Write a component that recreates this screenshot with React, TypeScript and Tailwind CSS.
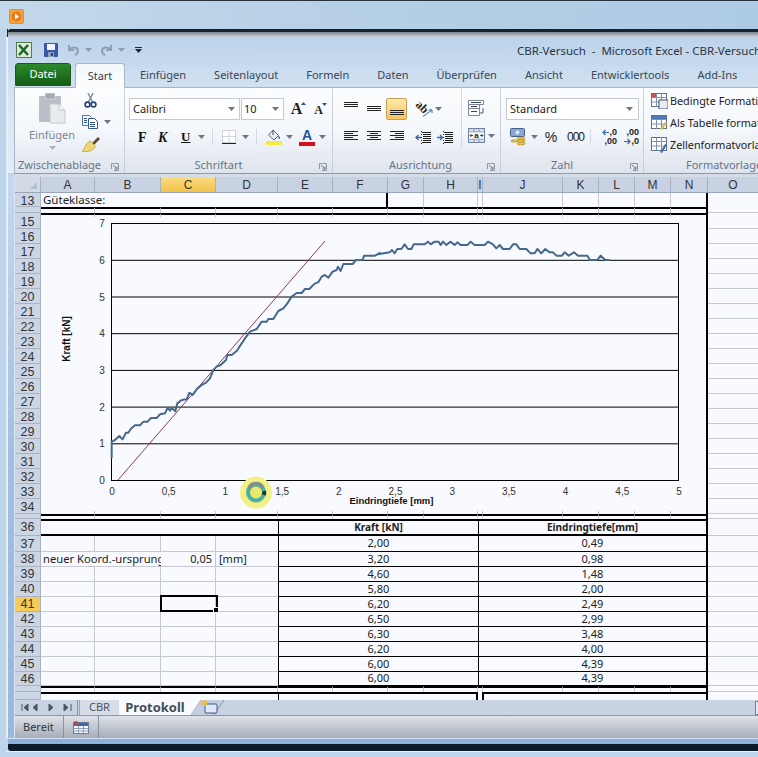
import { ReactNode } from "react";

const cols = [
  { name: "A", w: "w-[54px]" },
  { name: "B", w: "w-[66px]" },
  { name: "C", w: "w-[55px]" },
  { name: "D", w: "w-[62px]" },
  { name: "E", w: "w-[55px]" },
  { name: "F", w: "w-[55px]" },
  { name: "G", w: "w-[36px]" },
  { name: "H", w: "w-[54px]" },
  { name: "I", w: "w-[5px]" },
  { name: "J", w: "w-[80px]" },
  { name: "K", w: "w-[36px]" },
  { name: "L", w: "w-[36px]" },
  { name: "M", w: "w-[36px]" },
  { name: "N", w: "w-[37px]" },
];

const tableRows = [
  { n: 37, h: "h-[16px]", kraft: "2,00", tiefe: "0,49" },
  { n: 38, h: "h-[15px]", kraft: "3,20", tiefe: "0,98" },
  { n: 39, h: "h-[15px]", kraft: "4,60", tiefe: "1,48" },
  { n: 40, h: "h-[15px]", kraft: "5,80", tiefe: "2,00" },
  { n: 41, h: "h-[15px]", kraft: "6,20", tiefe: "2,49" },
  { n: 42, h: "h-[15px]", kraft: "6,50", tiefe: "2,99" },
  { n: 43, h: "h-[15px]", kraft: "6,30", tiefe: "3,48" },
  { n: 44, h: "h-[15px]", kraft: "6,20", tiefe: "4,00" },
  { n: 45, h: "h-[15px]", kraft: "6,00", tiefe: "4,39" },
  { n: 46, h: "h-[14px]", kraft: "6,00", tiefe: "4,39" },
];

const chartRows = Array.from({ length: 19 }, (_, i) => i + 16);

// curve traced off the 3x crops, so every piece keeps its crop offset
const trace = (pts: number[][], dx: number, dy: number) =>
  pts.map(([x, y]) => `${dx + x / 3},${dy + y / 3}`).join(" ");

const curve = [
  trace(
    [[335,295],[335,245],[345,240],[358,228],[368,238],[378,218],[385,218],[392,207],[405,196],[420,196],[430,185],[443,185],[453,174],[470,174],[480,163],[495,160],[503,143],[510,152],[516,143],[526,154],[532,130],[545,120],[560,118],[568,98],[578,105],[590,88],[605,75],[618,68],[630,55],[640,30],[650,20],[662,15],[678,0]],
    0,
    360
  ),
  trace(
    [[682,540],[695,540],[710,528],[735,490],[750,470],[770,462],[785,440],[800,440],[805,432],[820,432],[835,408],[850,400],[862,385],[875,365],[890,354],[905,354],[915,342],[928,342],[945,325],[955,322],[965,305],[975,300],[985,308],[998,290],[1010,285],[1014,275],[1022,288],[1030,267],[1058,267],[1068,255],[1088,255],[1092,242],[1125,242],[1140,234]],
    0,
    175
  ),
  trace(
    [[0,238],[35,232],[42,225],[50,235],[58,222],[70,222],[80,208],[90,222],[100,222],[107,208],[140,208],[150,200],[158,208],[170,200],[182,200],[188,210],[195,200],[205,210],[217,200],[230,210],[238,202],[248,210],[268,210],[278,200],[290,210],[320,210],[330,200],[345,208],[355,220],[365,210],[375,222],[395,222],[405,208],[415,208],[425,222],[445,222],[458,235],[470,235],[478,222],[490,235],[502,222],[515,232],[525,232],[535,242],[552,242],[560,232],[572,242],[588,232],[600,242],[628,242],[636,255],[658,255],[668,242],[682,255],[695,255]],
    378,
    175
  ),
].join(" ");

function Caret({ className = "" }: { className?: string }) {
  return (
    <svg width="7" height="4" viewBox="0 0 7 4" className={`shrink-0 ${className}`}>
      <path d="M0 0h7L3.5 4z" fill="#6d7683" />
    </svg>
  );
}

function Launcher({ className = "" }: { className?: string }) {
  return (
    <svg width="8" height="8" viewBox="0 0 8 8" className={className}>
      <path d="M.5 6V.5H7.5V7.5H3" fill="none" stroke="#8b97a6" />
      <path d="M2 2l4 4M6 3.5V6H3.5" fill="none" stroke="#6d7a8a" />
    </svg>
  );
}

function Lines({ rows, width = 14 }: { rows: number[][]; width?: number }) {
  return (
    <svg width={width} height="16" viewBox={`0 0 ${width} 16`} className="shrink-0">
      {rows.map(([a, b, y]) => (
        <rect key={`${a}-${y}`} x={a} y={y} width={b - a} height="1" fill="#222" />
      ))}
    </svg>
  );
}

function Sep({ className = "" }: { className?: string }) {
  return <div className={`w-px self-stretch bg-[#d3d9e1] ${className}`} />;
}

function Group({
  label,
  w,
  labelClass = "justify-center",
  children,
}: {
  label: string;
  w: string;
  labelClass?: string;
  children: ReactNode;
}) {
  return (
    <div className={`relative flex shrink-0 flex-col border-r border-[#c9d0d9] ${w}`}>
      <div className="h-[69px]">{children}</div>
      <div className={`flex h-[15px] items-center text-[11px] leading-none whitespace-nowrap text-[#667486] ${labelClass}`}>
        {label}
      </div>
      <Launcher className="absolute right-[5px] bottom-[2px]" />
    </div>
  );
}

function ClipboardGroup() {
  return (
    <div className="flex">
      <div className="ml-[7px] flex w-[60px] flex-col items-center pt-[5px]">
        <svg width="27" height="31" viewBox="0 0 27 31">
          <rect x="0" y="3" width="22" height="26" rx="1" fill="#b9bec7" />
          <rect x="6" y="0" width="10" height="6" rx="1" fill="#a4a9b2" stroke="#dfe2e6" strokeWidth=".7" />
          <path d="M11 11h9l6 6v13H11z" fill="#e9ebee" stroke="#c3c8cf" />
          <path d="M20 11v6h6" fill="#f6f7f8" stroke="#c3c8cf" />
        </svg>
        <div className="mt-[4px] text-[11px] leading-[14px] text-[#7a8594]">Einfügen</div>
        <Caret className="mt-[4px] opacity-50" />
      </div>
      <div className="flex flex-col pt-[5px]">
        <svg width="16" height="15" viewBox="0 0 16 15" className="ml-[1px]">
          <path d="M5 0l4.5 9M10 0L5.5 9" stroke="#7e8794" strokeWidth="1.4" fill="none" />
          <circle cx="4.5" cy="11.5" r="2.4" fill="none" stroke="#24417a" strokeWidth="1.6" />
          <circle cx="10.5" cy="11.5" r="2.4" fill="none" stroke="#24417a" strokeWidth="1.6" />
        </svg>
        <div className="mt-[7px] flex items-center gap-[5px]">
          <svg width="17" height="14" viewBox="0 0 17 14">
            <path d="M.5.5h7l2 2v8H.5z" fill="#f4f6fa" stroke="#5873a3" />
            <path d="M6.5 3.5h6l3 3v7h-9z" fill="#fff" stroke="#34568e" />
            <path d="M2 3.5h3M2 5.5h3M2 7.5h3M8 7.5h5M8 9.5h5M8 11.5h5" stroke="#34568e" />
          </svg>
          <Caret />
        </div>
        <svg width="18" height="15" viewBox="0 0 18 15" className="mt-[8px]">
          <path d="M10 6l6-6 2 2-6 6z" fill="#5a4a32" />
          <path d="M8 3.5l6 6-3 3c-3 2-7 2.5-11 2 2-1.500 2-4 5-8z" fill="#f0d66e" stroke="#a48c3d" strokeWidth=".6" />
        </svg>
      </div>
    </div>
  );
}

function FontGroup() {
  return (
    <div className="flex flex-col pt-[10px] pl-[4px]">
      <div className="flex h-[22px]">
        <div className="flex w-[111px] items-center justify-between border border-[#c4cbd4] bg-white pr-[4px] pl-[3px] text-[11px] text-[#222]">
          Calibri
          <Caret />
        </div>
        <div className="ml-px flex w-[43px] items-center justify-between border border-[#c4cbd4] bg-white pr-[4px] pl-[2px] text-[11px] text-[#222]">
          10
          <Caret />
        </div>
        <div className="relative ml-[5px] w-[15px] text-center font-['Liberation_Serif'] text-[16px] leading-[22px] font-bold text-[#1d1d1d]">
          A
          <svg width="5" height="3" viewBox="0 0 5 3" className="absolute top-[4px] -right-[2px]">
            <path d="M0 3h5L2.500 0z" fill="#26518f" />
          </svg>
        </div>
        <div className="relative ml-[9px] w-[11px] pt-px text-center font-['Liberation_Serif'] text-[12px] leading-[22px] font-bold text-[#1d1d1d]">
          A
          <svg width="5" height="3" viewBox="0 0 5 3" className="absolute top-[5px] -right-[3px]">
            <path d="M0 0h5L2.500 3z" fill="#26518f" />
          </svg>
        </div>
      </div>
      <div className="mt-[6px] flex h-[22px] items-center font-['Liberation_Serif'] text-[#111]">
        <span className="ml-[9px] w-[8px] text-[14px] font-bold">F</span>
        <span className="ml-[12px] w-[11px] text-[14px] font-bold italic">K</span>
        <span className="ml-[12px] w-[10px] text-[13px] font-bold underline">U</span>
        <Caret className="ml-[7px]" />
        <Sep className="mx-[7px] my-[3px]" />
        <svg width="14" height="14" viewBox="0 0 14 14" className="ml-[2px]">
          <path d="M.5.5h13v12H.5z" fill="#fff" stroke="#a9afb8" strokeDasharray="1 1" />
          <path d="M7 .5v12M.5 6.500h13" stroke="#a9afb8" strokeDasharray="1 1" />
          <path d="M0 13.500h14" stroke="#222" />
        </svg>
        <Caret className="ml-[6px]" />
        <Sep className="mx-[7px] my-[3px]" />
        <svg width="16" height="16" viewBox="0 0 16 16" className="ml-[2px]">
          <path d="M7 1l5.500 5.500L8 11 2.500 6z" fill="#e9eef5" stroke="#5b6674" />
          <path d="M7 1v5" stroke="#3b4552" />
          <path d="M12.500 6.500c1.500 1.500 2 3 1 3.500s-1.500-1.500-1-3.500z" fill="#365f9c" />
          <rect x="0" y="12" width="16" height="4" fill="#f3ec3e" />
        </svg>
        <Caret className="ml-[4px]" />
        <div className="ml-[6px] flex w-[16px] flex-col items-center">
          <span className="font-['Liberation_Sans'] text-[14px] leading-[12px] font-bold text-[#26518f]">A</span>
          <div className="mt-px h-[4px] w-[16px] bg-[#d2121c]" />
        </div>
        <Caret className="ml-[4px]" />
      </div>
    </div>
  );
}

function IndentIcon({ right = false }: { right?: boolean }) {
  return (
    <svg width="16" height="13" viewBox="0 0 16 13" className="shrink-0">
      <path d="M7 1.500h9M8 3.500h8M8 5.500h8M8 7.500h8M8 9.500h8M7 11.500h9" stroke="#1c1c1c" />
      <path d="M6.500 0v13" stroke="#1c1c1c" strokeDasharray="1 2" />
      {right ? (
        <path d="M0 6.500h5M3 4l2.500 2.500L3 9" fill="none" stroke="#3a66a6" strokeWidth="1.300" />
      ) : (
        <path d="M6 6.500H1M3.500 4L1 6.500 3.500 9" fill="none" stroke="#3a66a6" strokeWidth="1.300" />
      )}
    </svg>
  );
}

function AlignGroup() {
  const top = [[0, 14, 1], [0, 14, 3], [0, 14, 5]];
  const mid = [[0, 14, 5], [0, 14, 7], [0, 14, 9]];
  const left = [[0, 14, 2], [0, 9, 4], [0, 14, 6], [0, 9, 8], [0, 14, 10]];
  const center = [[0, 14, 2], [3, 11, 4], [0, 14, 6], [3, 11, 8], [0, 14, 10]];
  const right = [[0, 14, 2], [5, 14, 4], [0, 14, 6], [5, 14, 8], [0, 14, 10]];
  return (
    <div className="flex">
      <div className="flex w-[128px] flex-col pt-[10px] pl-[11px]">
        <div className="flex h-[22px] items-center">
          <Lines rows={top} />
          <div className="ml-[9px]">
            <Lines rows={mid} />
          </div>
          <div className="ml-[5px] flex h-[22px] w-[21px] items-center justify-center rounded-[2px] border border-[#c2a25a] bg-gradient-to-b from-[#fde9a8] to-[#f9c560] pt-[8px]">
            <Lines rows={mid} />
          </div>
          <div className="relative ml-[9px] h-[16px] w-[17px]">
            <span className="absolute top-0 left-0 rotate-[45deg] font-['Liberation_Serif'] text-[12px] leading-[12px] font-bold text-[#222]">ab</span>
            <svg width="10" height="10" viewBox="0 0 10 10" className="absolute right-0 bottom-0">
              <path d="M0 9.500L9 3M9 3H5.500M9 3v3" stroke="#47659a" fill="none" />
            </svg>
          </div>
          <Caret className="ml-[2px]" />
        </div>
        <div className="mt-[6px] flex h-[22px] items-center">
          <Lines rows={left} />
          <div className="ml-[9px]">
            <Lines rows={center} />
          </div>
          <div className="ml-[9px]">
            <Lines rows={right} />
          </div>
          <div className="ml-[11px]">
            <IndentIcon />
          </div>
          <div className="ml-[6px]">
            <IndentIcon right />
          </div>
        </div>
      </div>
      <div className="flex flex-col border-l border-[#d3d9e1] pt-[12px] pl-[6px]">
        <svg width="17" height="17" viewBox="0 0 17 17">
          <path d="M.5.500h15v4H.5zM.5 4.500h11v4H.5zM.5 8.500h11v7H.5z" fill="#fafbfc" stroke="#7e8795" />
          <path d="M3 2.500h10M3 6.500h6M3 11.500h6" stroke="#38475a" />
          <path d="M15 8v5h-3" fill="none" stroke="#3a5d96" />
        </svg>
        <div className="mt-[11px] flex items-center gap-[3px]">
          <svg width="17" height="15" viewBox="0 0 17 15" fontFamily="Liberation Sans">
            <rect x=".5" y=".5" width="16" height="14" fill="#d3deeb" stroke="#6f8099" />
            <path d="M.5 4h16M.5 11h16M6 .5V4M11 .5V4M6 11v3.500M11 11v3.500" stroke="#8d9db3" />
            <rect x="1" y="4.500" width="15" height="6" fill="#fff" />
            <path d="M2 7.500h3M2 7.500L3.500 6M2 7.500L3.500 9M15 7.500h-3M15 7.500L13.500 6M15 7.500L13.500 9" stroke="#2d4b80" fill="none" />
            <text x="8.500" y="10" fontSize="8" fontWeight="bold" textAnchor="middle" fill="#222">a</text>
          </svg>
          <Caret />
        </div>
      </div>
    </div>
  );
}

function DecimalArrow({ right = false }: { right?: boolean }) {
  return (
    <svg width="7" height="7" viewBox="0 0 7 7" className="shrink-0">
      {right ? (
        <path d="M0 3.500h6M3.500 1L6 3.500 3.500 6" fill="none" stroke="#3a66a6" strokeWidth="1.200" />
      ) : (
        <path d="M7 3.500H1M3.500 1L1 3.500 3.500 6" fill="none" stroke="#3a66a6" strokeWidth="1.200" />
      )}
    </svg>
  );
}

function NumberGroup() {
  return (
    <div className="flex flex-col pt-[10px] pl-[5px]">
      <div className="flex h-[22px] w-[133px] items-center justify-between border border-[#c4cbd4] bg-white pr-[5px] pl-[3px] text-[11px] text-[#222]">
        Standard
        <Caret />
      </div>
      <div className="mt-[6px] flex h-[22px] items-center">
        <svg width="17" height="18" viewBox="0 0 17 18" className="ml-[4px]">
          <rect x=".5" y=".5" width="14" height="8" rx="1" fill="#8ba6cf" stroke="#45608e" />
          <circle cx="7.500" cy="4.500" r="2" fill="#dfe8f5" />
          <ellipse cx="11" cy="10.500" rx="4" ry="1.500" fill="#e8c650" stroke="#9c7e1f" strokeWidth=".6" />
          <ellipse cx="11" cy="13" rx="4" ry="1.500" fill="#e8c650" stroke="#9c7e1f" strokeWidth=".6" />
          <ellipse cx="11" cy="15.500" rx="4" ry="1.500" fill="#e8c650" stroke="#9c7e1f" strokeWidth=".6" />
          <ellipse cx="4" cy="13" rx="3" ry="1.200" fill="#e8c650" stroke="#9c7e1f" strokeWidth=".6" />
        </svg>
        <Caret className="ml-[4px]" />
        <span className="ml-[6px] w-[14px] text-center font-['Liberation_Sans'] text-[14px] text-[#222]">%</span>
        <span className="ml-[9px] w-[17px] font-['Liberation_Sans'] text-[12px] tracking-[-1px] text-[#222]">000</span>
        <Sep className="mx-[6px] my-[3px]" />
        <div className="ml-[2px] flex w-[18px] flex-col items-end font-['Liberation_Sans'] text-[9px] leading-[9px] font-bold text-[#222]">
          <div className="flex items-center">
            <DecimalArrow />,0
          </div>
          <div>,00</div>
        </div>
        <div className="ml-[4px] flex w-[18px] flex-col items-end font-['Liberation_Sans'] text-[9px] leading-[9px] font-bold text-[#222]">
          <div>,00</div>
          <div className="flex items-center">
            <DecimalArrow right />,0
          </div>
        </div>
      </div>
    </div>
  );
}

function StyleIcon({ kind }: { kind: number }) {
  return (
    <svg width="17" height="16" viewBox="0 0 17 16" className="shrink-0">
      <rect x=".5" y=".5" width="15" height="13" fill="#fff" stroke="#5d7192" />
      <path d="M.5 4.500h15M.5 9h15M5.500.5v13M10.500.5v13" stroke="#7d92b3" />
      {kind === 0 && <rect x="1" y="1" width="4" height="3" fill="#c9534d" />}
      {kind === 0 && <rect x="8" y="7" width="9" height="9" fill="#e9eef5" stroke="#45566f" />}
      {kind === 1 && <rect x="1" y="1" width="14" height="3" fill="#4f79b5" />}
      {kind === 1 && <path d="M9 14l5-7 2 1-5 7z" fill="#e4b63c" />}
      {kind === 2 && <path d="M9 15l5-8 2 1-5 8z" fill="#4a6fa8" />}
    </svg>
  );
}

function StylesGroup() {
  const items = ["Bedingte Formatierung", "Als Tabelle formatieren", "Zellenformatvorlagen"];
  return (
    <div className="flex h-[69px] flex-col gap-[6px] pt-[5px] pl-[7px]">
      {items.map((t, i) => (
        <div key={t} className="flex h-[16px] items-center gap-[2px] text-[10.800px] whitespace-nowrap text-[#222]">
          <StyleIcon kind={i} />
          {t}
        </div>
      ))}
    </div>
  );
}

function Ribbon() {
  return (
    <div className="ml-[6px] flex h-[86px] overflow-hidden border-t border-l border-[#a9b4c2] bg-gradient-to-b from-[#fcfdfe] via-[#f4f7fb] to-[#dfe5ed]">
      <Group label="Zwischenablage" w="w-[110px]" labelClass="pl-[3px]">
        <ClipboardGroup />
      </Group>
      <Group label="Schriftart" w="w-[208px]" labelClass="justify-center pr-[20px]">
        <FontGroup />
      </Group>
      <Group label="Ausrichtung" w="w-[168px]" labelClass="justify-center pl-[8px]">
        <AlignGroup />
      </Group>
      <Group label="Zahl" w="w-[143px]" labelClass="justify-center pr-[20px]">
        <NumberGroup />
      </Group>
      <div className="flex w-[115px] shrink-0 flex-col">
        <StylesGroup />
        <div className="flex h-[15px] pl-[42px] text-[11px] leading-[15px] whitespace-nowrap text-[#667486]">Formatvorlagen</div>
      </div>
    </div>
  );
}

function TabBar() {
  const tabs = ["Einfügen", "Seitenlayout", "Formeln", "Daten", "Überprüfen", "Ansicht", "Entwicklertools", "Add-Ins"];
  return (
    <div className="flex h-[25px] items-end pl-[7px] text-[11px] whitespace-nowrap">
      <div className="mb-px flex h-[23px] w-[56px] items-center justify-center rounded-t-[3px] border border-[#1c5a18] bg-gradient-to-b from-[#2e8a2b] to-[#135d14] text-white">
        Datei
      </div>
      <div className="relative -mb-px ml-[4px] flex h-[25px] w-[50px] items-center justify-center rounded-t-[3px] border border-b-0 border-[#aab5c3] bg-gradient-to-b from-[#f3f7fb] to-[#fcfdfe] text-[#37414d]">
        Start
      </div>
      <div className="flex h-[24px] items-center pl-px text-[#3a4654]">
        {tabs.map((t) => (
          <span key={t} className="px-[14px]">
            {t}
          </span>
        ))}
      </div>
    </div>
  );
}

function QuickAccess() {
  return (
    <div className="flex h-[25px] items-center pl-[8px]">
      <svg width="16" height="16" viewBox="0 0 16 16" className="shrink-0">
        <rect x=".5" y=".5" width="15" height="15" fill="#dfead9" stroke="#4e7f4c" />
        <path d="M3 3l9 10M12 3L3 13" stroke="#1a6a2a" strokeWidth="2.600" />
      </svg>
      <div className="ml-[4px] h-[15px] w-px bg-[#6f8193]" />
      <svg width="14" height="14" viewBox="0 0 14 14" className="ml-[8px] shrink-0">
        <rect width="14" height="14" rx="1" fill="#3658a8" />
        <rect x="3" y="1" width="8" height="6" fill="#f2f5fa" />
        <rect x="4" y="9" width="6" height="5" fill="#8fa0c2" />
        <rect x="7" y="10" width="2" height="3" fill="#29407e" />
      </svg>
      <svg width="13" height="12" viewBox="0 0 13 12" className="ml-[9px] shrink-0">
        <path d="M2 1v5h5M2 6c3-4 9-3 9 1 0 2-1 3-3 4" fill="none" stroke="#8e9fb2" strokeWidth="2" />
      </svg>
      <Caret className="ml-[5px] opacity-60" />
      <svg width="13" height="12" viewBox="0 0 13 12" className="ml-[8px] shrink-0">
        <path d="M11 1v5H6M11 6C8 2 2 3 2 7c0 2 1 3 3 4" fill="none" stroke="#8e9fb2" strokeWidth="2" />
      </svg>
      <Caret className="ml-[5px] opacity-60" />
      <div className="ml-[6px] h-[15px] w-px bg-[#6f8193]" />
      <svg width="7" height="6" viewBox="0 0 7 6" className="ml-[4px] shrink-0">
        <path d="M0 0h7v1H0zM0 2h7L3.500 6z" fill="#1f2a38" />
      </svg>
      <div className="ml-[375px] pt-[2px] text-[11.500px] whitespace-pre text-[#2a3542]">
        CBR-Versuch  -  Microsoft Excel - CBR-Versuch
      </div>
    </div>
  );
}

function RowHead({
  n,
  selected = false,
  pad = "pt-px",
}: {
  n?: number;
  selected?: boolean;
  pad?: string;
}) {
  return (
    <div
      className={`flex w-[26px] shrink-0 items-center justify-center overflow-hidden border-r border-b border-[#aab3c0] font-['Liberation_Sans'] text-[12.500px] leading-none font-normal text-[#333] ${pad} ${
        selected ? "bg-[#f6cb57]" : "bg-[#ccd5e3]"
      }`}
    >
      {n}
    </div>
  );
}

function O() {
  return <div className="flex-1 border-b border-[#c6c9cf]" />;
}

// plain run of A..N cells with the thick right edge on N
function GridCells({ border = "border-b" }: { border?: string }) {
  return (
    <>
      {cols.map((c) => (
        <div
          key={c.name}
          className={`shrink-0 border-[#c6c9cf] ${c.w} ${border} ${c.name === "N" ? "border-r-2 border-r-black" : "border-r"}`}
        />
      ))}
    </>
  );
}

function Chart() {
  const ys = [6, 5, 4, 3, 2, 1];
  const xTicks = ["0", "0,5", "1", "1,5", "2", "2,5", "3", "3,5", "4", "4,5", "5"];
  return (
    <svg
      viewBox="44 217 660 294"
      width="660"
      height="294"
      className="absolute top-[24px] left-[29px] bg-[#f8faff]"
      fontFamily="Liberation Sans"
    >
      <rect x="111.500" y="223.500" width="567" height="257" fill="none" stroke="#000" />
      {ys.map((v) => (
        <path key={v} d={`M111 ${480.5 - v * 36.7}H678`} stroke="#000" />
      ))}
      {[7, 6, 5, 4, 3, 2, 1, 0].map((v) => (
        <text key={v} x="102" y={484 - v * 36.7} fontSize="10" fill="#333" textAnchor="middle">
          {v}
        </text>
      ))}
      {xTicks.map((t, i) => (
        <text key={t} x={112 + i * 56.7} y="495" fontSize="10" fill="#333" textAnchor="middle">
          {t}
        </text>
      ))}
      <text x="391.500" y="504" fontSize="9.500" fontWeight="bold" fill="#111" textAnchor="middle">
        Eindringtiefe [mm]
      </text>
      <text transform="translate(70 339) rotate(-90)" fontSize="10" fontWeight="bold" fill="#111" textAnchor="middle">
        Kraft [kN]
      </text>
      <path d="M118 480L325 241" stroke="#8c3c4c" fill="none" />
      <polyline points={curve} fill="none" stroke="#45688c" strokeWidth="2" strokeLinejoin="round" />
      <circle cx="256" cy="492.500" r="16" fill="#f1f188" />
      <circle cx="256" cy="492.500" r="8" fill="#e9e96c" stroke="#4cb0a0" strokeWidth="4" />
      <path d="M249 488a8 8 0 0 1 14 0" fill="none" stroke="#84928f" strokeWidth="4" />
      <path d="M264 491a8 8 0 0 1 0 4" fill="none" stroke="#17383a" strokeWidth="4" />
    </svg>
  );
}

function Sheet() {
  return (
    <div className="relative bg-[#f8faff] text-[11.500px] text-[#222]">
      <div className="flex h-[14px]">
        <RowHead n={13} pad="pt-[3px]" />
        <div className="flex w-[347px] shrink-0 items-center border-r-2 border-black pl-[2px] whitespace-nowrap">Güteklasse:</div>
        {cols.slice(6).map((c) => (
          <div key={c.name} className={`shrink-0 border-[#c6c9cf] ${c.w} ${c.name === "N" ? "border-r-2 border-r-black" : "border-r"}`} />
        ))}
        <div className="flex-1" />
      </div>
      <div className="flex h-[6px]">
        <RowHead />
        <GridCells border="border-t-2 border-t-black" />
        <O />
      </div>
      <div className="flex h-[16px]">
        <RowHead n={15} pad="pt-[3px]" />
        <GridCells border="border-t-2 border-t-black" />
        <O />
      </div>
      {chartRows.map((n) => (
        <div key={n} className="flex h-[15px]">
          <RowHead n={n} pad="pt-[3px]" />
          <GridCells border="" />
          <O />
        </div>
      ))}
      <div className="flex h-[5px]">
        <RowHead />
        <GridCells border="border-t-2 border-t-black" />
        <O />
      </div>
      <div className="flex h-[17px] text-[10px] font-bold">
        <RowHead n={36} />
        <div className="w-[237px] shrink-0 border-y-2 border-black" />
        <div className="flex w-[200px] shrink-0 items-center justify-center border-y-2 border-l border-black">Kraft [kN]</div>
        <div className="flex w-[230px] shrink-0 items-center justify-center border-y-2 border-r-2 border-l border-black">Eindringtiefe[mm]</div>
        <O />
      </div>
      {tableRows.map((r) => (
        <div key={r.n} className={`flex text-[11px] ${r.h}`}>
          <RowHead n={r.n} selected={r.n === 41} />
          {r.n === 38 ? (
            <>
              <div className="w-[120px] shrink-0 overflow-hidden border-b border-[#c6c9cf] pl-[2px] text-[11.200px] leading-[14px] whitespace-nowrap">neuer Koord.-ursprung</div>
              <div className="w-[55px] shrink-0 border-r border-b border-[#c6c9cf] pr-[3px] text-right leading-[14px]">0,05</div>
              <div className="w-[62px] shrink-0 border-b border-[#c6c9cf] pl-[3px] leading-[14px]">[mm]</div>
            </>
          ) : (
            cols.slice(0, 4).map((c) => (
              <div
                key={c.name}
                className={`relative shrink-0 border-b border-[#c6c9cf] ${c.w} ${c.name === "D" ? "" : "border-r"}`}
              >
                {r.n === 41 && c.name === "C" && (
                  <div className="absolute -top-[2px] -left-px z-10 h-[17px] w-[58px] border-2 border-black">
                    <div className="absolute -right-[3px] -bottom-[3px] h-[6px] w-[6px] border border-[#f8faff] bg-black" />
                  </div>
                )}
              </div>
            ))
          )}
          <div className="flex w-[200px] shrink-0 items-center justify-center border-b border-l border-black">{r.kraft}</div>
          <div className="flex w-[230px] shrink-0 items-center justify-center border-r-2 border-b border-l border-black">{r.tiefe}</div>
          <O />
        </div>
      ))}
      <div className="flex h-[6px]">
        <RowHead />
        <GridCells border="border-t-2 border-t-black" />
        <O />
      </div>
      <div className="flex h-[8px]">
        <RowHead />
        <div className="w-[237px] shrink-0 border-t-2 border-black" />
        <div className="w-[200px] shrink-0 border-t-2 border-r-2 border-l border-black" />
        <div className="w-[4px] shrink-0" />
        <div className="w-[226px] shrink-0 border-t-2 border-r-2 border-l-2 border-black" />
        <div className="flex-1" />
      </div>
      <Chart />
    </div>
  );
}

function ColumnHeader() {
  return (
    <div className="flex h-[16px] border-b border-[#9aa5b5] bg-[#c8d2e3] font-['Liberation_Sans'] text-[12px] leading-[17px] text-[#333]">
      <div className="flex w-[26px] shrink-0 items-end justify-end border-r border-[#aab3c0] bg-[#d2dae6] p-[3px]">
        <svg width="7" height="7" viewBox="0 0 7 7">
          <path d="M7 0v7H0z" fill="#b3bdcb" />
        </svg>
      </div>
      {cols.map((c) => (
        <div
          key={c.name}
          className={`shrink-0 border-r border-[#a6b0be] text-center ${c.w} ${
            c.name === "C" ? "bg-gradient-to-b from-[#f9dc82] to-[#f4c243]" : ""
          }`}
        >
          {c.name}
        </div>
      ))}
      <div className="flex-1 text-center">O</div>
    </div>
  );
}

function SheetTabs() {
  return (
    <div className="relative flex h-[16px] items-stretch border-b border-[#8d97a5] bg-[#c8d2e2]">
      <div className="flex w-[62px] shrink-0 items-center gap-[8px] pl-[6px] text-[#4a5564]">
        <svg width="52" height="9" viewBox="0 0 52 9">
          <path d="M1 1v7M7 1L3 4.500 7 8zM16 1l-4 3.500L16 8zM28 1l4 3.500L28 8zM43 1l4 3.500L43 8zM50 1v7" fill="#4a5564" stroke="#4a5564" />
        </svg>
      </div>
      <div className="w-px bg-[#8d97a5]" />
      <div className="ml-[1px] flex w-[40px] items-center justify-center border-l border-[#9aa5b4] bg-[#d6dde9] text-[11px] text-[#4b5563]">CBR</div>
      <div className="flex w-[72px] items-center justify-center bg-[#f8faff] text-[13px] font-bold text-[#444c58]">Protokoll</div>
      <svg width="42" height="16" viewBox="0 0 42 16">
        <path d="M0 0h10L0 15z" fill="#f8faff" />
        <path d="M0 15L10 0" stroke="#8d97a5" />
        <path d="M10 0h23l-10 15H0z" fill="#c3cfe0" />
        <path d="M33 0L23 15" stroke="#8d97a5" />
        <rect x="14" y="4" width="12" height="9" rx="1" fill="#dfe9f6" stroke="#3a5a88" />
        <circle cx="13" cy="3" r="3" fill="#e9c04c" />
      </svg>
      <div className="absolute top-px right-0 h-[14px] w-[3px] border-y border-l border-[#77818f] bg-[#e4e9f0]" />
    </div>
  );
}

function StatusBar() {
  return (
    <div className="flex h-[22px] items-center bg-gradient-to-b from-[#dfe3e9] to-[#a6adb8] text-[11px] text-[#2f3a47]">
      <span className="pl-[8px]">Bereit</span>
      <div className="ml-[9px] h-[22px] w-px bg-[#8b95a2]" />
      <svg width="16" height="13" viewBox="0 0 16 13" className="ml-[9px]">
        <rect x=".5" y="1.500" width="15" height="11" fill="#f3f6fa" stroke="#6b7c95" />
        <rect x="1" y="2" width="14" height="3" fill="#3f6aa8" />
        <path d="M1 7.500h14M1 10h14M5.500 5v7M10.500 5v7" stroke="#8ea2be" />
        <circle cx="3" cy="2" r="2" fill="#c44a3f" />
      </svg>
      <div className="ml-[9px] h-[22px] w-px bg-[#8b95a2]" />
    </div>
  );
}

export default function App() {
  return (
    <div className="flex h-[757px] w-[758px] flex-col overflow-hidden bg-[#bdd4ea] font-['Noto_Sans']">
      {/* Player window glass */}
      <div className="h-[29px] shrink-0 border-t border-[#27343f] bg-gradient-to-r from-[#c3d8ea] via-[#b5cfe5] to-[#aecbe4] pt-[8px] pl-[9px]">
        <svg width="15" height="15" viewBox="0 0 15 15">
          <rect x=".5" y=".5" width="14" height="14" rx="1" fill="#f4a23a" stroke="#7ba6cf" />
          <circle cx="7.500" cy="7.500" r="5" fill="#e8791a" />
          <path d="M6 4.500l4 3-4 3z" fill="#fff" />
        </svg>
      </div>

      <div className="ml-[7px] flex h-[8px] shrink-0 flex-col border-l border-[#17222e]">
        <div className="h-[3px] rounded-tl-[3px] bg-[#17222e]" />
        <div className="h-[5px] bg-gradient-to-b from-[#7d858d] to-[#c7cfd8]" />
      </div>

      <div className="ml-[6px] flex-1 overflow-hidden border-l-2 border-[#e6eef7]">
        <div className="bg-gradient-to-b from-[#bcd3ea] via-[#d9e6f3] to-[#e3ecf6]">
          <QuickAccess />
          <TabBar />
          <Ribbon />
        </div>
        <div className="ml-[6px] h-[4px] border-t border-[#8f9aa8] bg-[#d5dde8]" />
        <div className="flex">
          <div className="w-[6px] shrink-0 bg-gradient-to-b from-[#c5d9ee] via-[#9fc0e2] to-[#97b9dc]" />
          <div className="min-w-0 flex-1 border-l border-[#dbe6f2]">
            <ColumnHeader />
            <Sheet />
            <SheetTabs />
            <StatusBar />
          </div>
        </div>
      </div>

      <div className="h-[19px] shrink-0">
        <div className="ml-[8px] h-px bg-[#cfe0f0]" />
        <div className="ml-[8px] h-[5px] bg-[#8db1da]" />
        <div className="ml-[8px] h-[7px] rounded-bl-[3px] bg-[#0b1b29]" />
        <div className="ml-[6px] h-px bg-[#e6eef7]" />
      </div>
    </div>
  );
}
